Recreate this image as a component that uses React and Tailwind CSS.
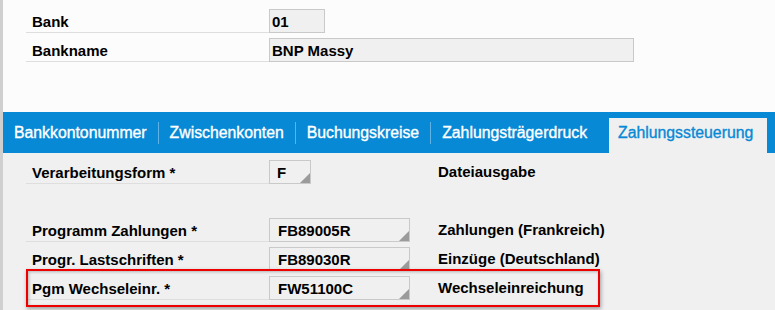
import React from "react";

const font = { fontFamily: '"Liberation Sans", Arial, sans-serif' };

function Tri() {
  return (
    <svg className="absolute right-0 bottom-0" width="10" height="10" viewBox="0 0 10 10">
      <polygon points="10,0 10,10 0,10" fill="#9b9b9b" />
    </svg>
  );
}

function Row({ label, value, width, tri, desc, pad = "pl-[2px]" }) {
  return (
    <div className="flex h-[24px] items-stretch">
      <div className="w-[243px] h-[24px] border-b border-[#dedede] pl-[6px] pt-[1px] leading-[23px] font-bold text-[15px] text-black">
        {label}
      </div>
      <div className={desc !== undefined ? "w-[141px]" : ""}>
        <div
          className={`relative ${width} h-[24px] border border-[#c9c9c9] bg-[#f0f0f0] ${pad} pt-[1px] leading-[21px] font-bold text-[15px] text-black`}
        >
          {value}
          {tri && <Tri />}
        </div>
      </div>
      {desc !== undefined ? (
        <div className="flex-1 pl-[28px] leading-[24px] font-bold text-[15px] text-black">{desc}</div>
      ) : null}
    </div>
  );
}

function Tab({ children, sep = true }) {
  return (
    <div className="flex items-center h-[41px]">
      <div className="px-[11px] pt-[1px] text-white text-[15.8px] [-webkit-text-stroke:0.35px_#ffffff]">{children}</div>
      {sep && <div className="w-px h-[22px] bg-[#5fb2e6]" />}
    </div>
  );
}

export default function App() {
  return (
    <div className="w-[775px] h-[310px] overflow-hidden relative border-l-[3px] border-[#cfcfcf] bg-[#f0f0f0]" style={font}>
      <div className="h-[112px] bg-[#fcfcfc] pt-[9px] pl-[23px] flex flex-col gap-[5px]">
        <Row label="Bank" value="01" width="w-[56px]" />
        <Row label="Bankname" value="BNP Massy" width="w-[365px]" />
      </div>
      <div className="h-[41px] bg-[#0789d5] flex items-stretch">
        <Tab>Bankkontonummer</Tab>
        <Tab>Zwischenkonten</Tab>
        <Tab>Buchungskreise</Tab>
        <Tab sep={false}>Zahlungsträgerdruck</Tab>
        <div className="ml-auto mr-[8px] mt-[6px] w-[158px] bg-[#f0f0f0] pl-[9px] flex items-center pb-[5px] text-[15.8px] text-[#0789d5] [-webkit-text-stroke:0.35px_#0789d5]">
          Zahlungssteuerung
        </div>
      </div>
      <div className="pt-[7px] pl-[23px] flex flex-col gap-[5px]">
        <Row label="Verarbeitungsform *" value="F" width="w-[42px]" tri desc="Dateiausgabe" pad="pl-[7px]" />
        <div className="h-[24px]" />
        <Row label="Programm Zahlungen *" value="FB89005R" width="w-[141px]" tri desc="Zahlungen (Frankreich)" pad="pl-[8px]" />
        <Row label="Progr. Lastschriften *" value="FB89030R" width="w-[141px]" tri desc="Einzüge (Deutschland)" pad="pl-[8px]" />
        <Row label="Pgm Wechseleinr. *" value="FW51100C" width="w-[141px]" tri desc="Wechseleinreichung" pad="pl-[8px]" />
      </div>
      <div className="absolute left-[23px] top-[269px] w-[574px] h-[38px] border-2 border-[#ee0000] shadow-[1px_2px_4px_rgba(0,0,0,0.35),inset_1px_1px_3px_rgba(0,0,0,0.25)]" />
    </div>
  );
}
